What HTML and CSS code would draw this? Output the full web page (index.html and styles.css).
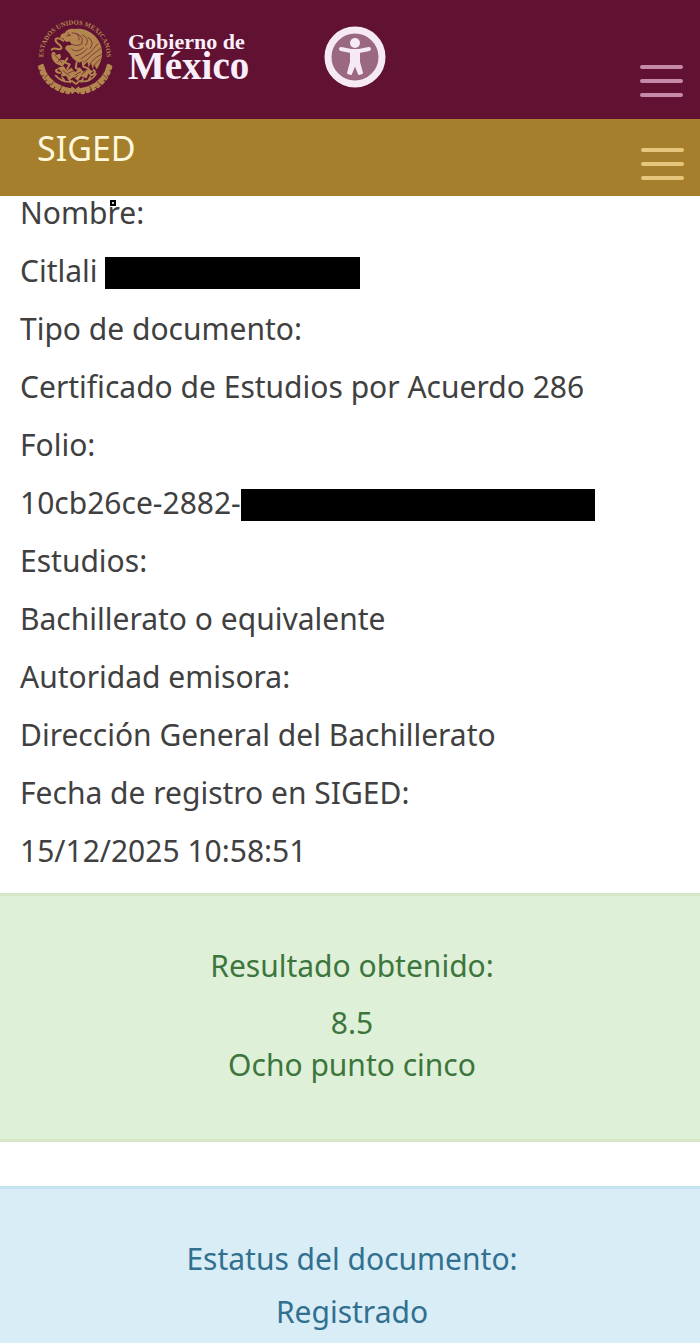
FILE: index.html
```html
<!DOCTYPE html>
<html lang="es">
<head>
<meta charset="utf-8">
<meta name="viewport" content="width=device-width, initial-scale=1">
<title>SIGED</title>
<link rel="stylesheet" href="styles.css">
</head>
<body>
<header class="gov-bar">
  <a class="brand" href="#" aria-label="Gobierno de México">
    <svg class="crest" viewBox="0 0 270 270" aria-hidden="true">
      <defs><path id="ring" d="M44 166 A95 95 0 1 1 226 166"/></defs>
      <text class="crest-text"><textPath href="#ring" startOffset="50%" text-anchor="middle">ESTADOS UNIDOS MEXICANOS</textPath></text>
      <g fill="#b3864f">
        <path d="M104 70C108 58 122 54 135 57C153 53 180 61 195 78C211 94 220 119 215 143C211 157 207 170 199 178L194 165L188 176L183 160L176 172L172 155L163 166L160 150L149 158C137 154 125 144 120 132L108 119C102 112 110 104 117 106L126 105L119 94C110 98 103 94 101 86L91 84C90 76 96 70 104 70Z"/>
        <path d="M67 127C73 123 79 129 77 136L88 131C95 135 94 144 87 149L101 150C107 158 103 166 95 169L78 161C68 153 60 137 67 127Z"/>
        <path d="M82 174L101 168L111 182L124 173L136 187L149 172L160 185L176 176L190 185L174 193L170 205L153 199L143 213L131 201L116 211L109 198L93 199L96 187Z"/>
      </g>
      <g fill="none" stroke="#b3864f" stroke-linecap="round" stroke-linejoin="round">
        <path stroke-width="6" d="M100 92C79 78 70 88 82 99C94 108 101 118 85 118C75 116 70 112 65 119M112 145L103 157L119 163L112 177M140 157L137 174L151 179M158 154L160 170L176 176M81 179C72 183 85 190 91 188M180 192C190 202 201 182 190 180"/>
        <path stroke-width="5" d="M77 197C94 215 111 218 126 213L138 222L150 212C170 219 188 208 198 192M103 211L96 202M121 217L118 207M154 216L159 205M174 212L181 200"/>
        <path stroke-width="13" stroke-dasharray="17 7" d="M36 168C45 208 82 238 127 241M236 168C227 208 190 238 145 241"/>
        <path stroke-width="8" stroke-dasharray="7 10" d="M28 170C38 217 77 246 126 250M243 170C233 217 195 246 146 250"/>
        <path stroke-width="5" d="M126 232L146 249M146 232L126 249"/>
      </g>
      <g fill="none" stroke="#611232" stroke-width="2" stroke-linecap="round">
        <path d="M113 69L121 76L110 78M126 69C143 68 149 79 147 90M139 71C158 78 160 89 154 98M158 75C173 84 176 93 167 106M174 82C188 92 190 104 180 115M127 103C136 108 149 108 158 99M125 117C137 129 152 120 161 113M137 137C149 136 163 127 171 116M153 146L180 128L204 101M164 156L185 136L211 116M178 163L196 144L214 133M190 169L203 154L211 147"/>
        <path d="M73 134L85 146L96 158M83 156L92 146M99 182L118 197M115 189L130 183M135 195L152 186M155 193L168 184M132 206L143 197"/>
        <path d="M54 193L43 205M72 214L64 225M95 228L91 240M219 194L231 204M202 214L210 224M179 228L184 239"/>
      </g>
    </svg>
    <span class="wordmark"><span class="wordmark-top">Gobierno de</span><span class="wordmark-main">México</span></span>
  </a>
  <button class="access" type="button" aria-label="Accesibilidad">
    <svg viewBox="0 0 62 62" aria-hidden="true">
      <circle cx="31" cy="31" r="27" fill="#9b6881" stroke="#f5eaf4" stroke-width="7"/>
      <circle cx="31" cy="17" r="5" fill="#f5eaf4"/>
      <path fill="none" stroke="#f5eaf4" stroke-width="4" stroke-linecap="round" stroke-linejoin="round" d="M17 23L27 25H35L45 23"/>
      <path fill="#f5eaf4" stroke="#f5eaf4" stroke-width="2" stroke-linejoin="round" d="M27 25H35V36L38 47L35 48L31 38L27 48L24 47L27 36Z"/>
    </svg>
  </button>
  <button class="menu menu-gov" type="button" aria-label="Menú de gobierno"><span></span><span></span><span></span></button>
</header>
<nav class="site-bar">
  <a class="site-name" href="#">SIGED</a>
  <button class="menu menu-site" type="button" aria-label="Menú SIGED"><span></span><span></span><span></span></button>
</nav>
<main>
  <dl class="details">
    <dt><span class="marked">Nombre:</span></dt>
    <dd class="masked">Citlali <span class="mask mask-name"></span></dd>
    <dt>Tipo de documento:</dt>
    <dd>Certificado de Estudios por Acuerdo 286</dd>
    <dt>Folio:</dt>
    <dd class="masked">10cb26ce-2882-<span class="mask mask-folio"></span></dd>
    <dt>Estudios:</dt>
    <dd>Bachillerato o equivalente</dd>
    <dt>Autoridad emisora:</dt>
    <dd>Dirección General del Bachillerato</dd>
    <dt>Fecha de registro en SIGED:</dt>
    <dd>15/12/2025 10:58:51</dd>
  </dl>
  <section class="notice success">
    <p class="notice-title">Resultado obtenido:</p>
    <p>8.5<br>Ocho punto cinco</p>
  </section>
  <section class="notice info">
    <p class="notice-title">Estatus del documento:</p>
    <p>Registrado</p>
  </section>
</main>
</body>
</html>
```

FILE: styles.css
```css
*, *::after { box-sizing: border-box; }
body {
  margin: 0;
  background: #fff;
  color: #404041;
  font-family: "Noto Sans", sans-serif;
  font-size: 30px;
  line-height: 42px;
}
a { color: inherit; text-decoration: none; }
button { padding: 0; border: 0; background: none; }
p, dl, dd { margin: 0; }

.gov-bar {
  display: flex;
  align-items: flex-start;
  min-height: 119px;
  padding: 10px 17px 10px 30px;
  background: #611232;
}
.brand { display: flex; gap: 8px; color: #f9effa; }
.crest { width: 90px; height: 90px; }
.crest-text {
  fill: #b3864f;
  font-family: "Liberation Serif", serif;
  font-size: 20px;
  font-weight: bold;
}
.wordmark {
  display: flex;
  flex-direction: column;
  padding-top: 20px;
  font-family: "Liberation Serif", serif;
  font-weight: bold;
}
.wordmark-top { font-size: 22px; line-height: 24px; }
.wordmark-main { font-size: 39px; line-height: 24px; }
.access { width: 62px; height: 62px; margin: 16px 0 0 75px; }
.access svg { display: block; }

.menu { display: flex; flex-direction: column; gap: 10px; margin-left: auto; }
.menu span { width: 43px; height: 4px; border-radius: 2px; }
.menu-gov { margin-top: 55px; }
.menu-gov span { background: #c68aa9; }
.menu-site { margin-top: 29px; }
.menu-site span { background: #e6c67d; }

.site-bar {
  display: flex;
  align-items: flex-start;
  min-height: 77px;
  padding: 0 16px 0 37px;
  background: #a57f2c;
}
.site-name { padding-top: 8px; color: #fff8dc; font-size: 34px; }

.details { margin-top: -4px; padding: 0 20px 21px; }
.details dt,
.details dd { padding-bottom: 16px; }
.details dd:last-child { padding-bottom: 0; }
.marked { position: relative; }
.marked::after {
  content: "";
  position: absolute;
  top: 8px;
  left: 90px;
  width: 6px;
  height: 6px;
  border: 2px solid #000;
  background: #ccc;
}
.masked { display: flex; white-space: pre; }
.mask { height: 32px; margin-top: 7px; background: #000; }
.mask-name { width: 255px; }
.mask-folio { width: 354px; }

.notice { border: solid; border-width: 3px 0; text-align: center; padding: 49px 16px 53px 20px; }
.notice-title { margin-bottom: 15px; }
.success { margin-bottom: 44px; background: #dff0d8; border-color: #d6e6c6; color: #3c763d; }
.info { padding-bottom: 16px; border-bottom: 0; background: #d9edf7; border-color: #c5e3ee; color: #31708f; }
.info .notice-title { margin-bottom: 11px; }
```
